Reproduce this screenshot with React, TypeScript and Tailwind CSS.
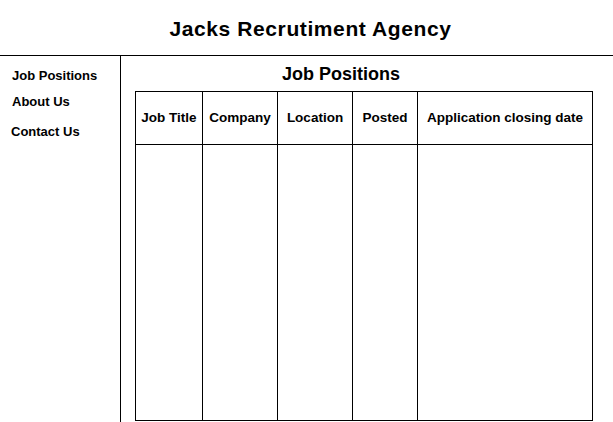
const columns = ['Job Title', 'Company', 'Location', 'Posted', 'Application closing date'];

const navItems = [
  { label: 'Job Positions', className: 'pl-[12px]' },
  { label: 'About Us', className: 'mt-[13px] pl-[12px]' },
  { label: 'Contact Us', className: 'mt-[17px] pl-[11px]' },
];

export default function App() {
  return (
    <div
      className="w-[613px] h-[422px] bg-white text-black font-bold overflow-hidden"
      style={{ fontFamily: '"Liberation Sans", Arial, sans-serif' }}
    >
      {/* Header */}
      <header className="h-[56px] border-b border-black pt-[18px] pl-[8px] text-center">
        <h1 className="text-[21px] leading-none tracking-[0.6px]">Jacks Recrutiment Agency</h1>
      </header>

      <div className="flex h-[366px]">
        {/* Sidebar */}
        <nav className="w-[121px] shrink-0 border-r border-black pt-[13px]">
          {navItems.map((item) => (
            <div key={item.label} className={`text-[13px] leading-none ${item.className}`}>
              {item.label}
            </div>
          ))}
        </nav>

        {/* Main */}
        <main className="flex-1 pl-[14px] pt-[9px]">
          <h2 className="ml-[147px] text-[18px] leading-none">Job Positions</h2>
          <div className="mt-[8px] w-[458px] h-[330px] border border-black grid grid-cols-[67px_75px_75px_65px_174px] grid-rows-[53px_1fr]">
            {columns.map((col, i) => (
              <div
                key={col}
                className={`flex items-center justify-center border-b border-black text-[13.5px] leading-none whitespace-nowrap ${
                  i < columns.length - 1 ? 'border-r' : ''
                }`}
              >
                {col}
              </div>
            ))}
            {columns.map((col, i) => (
              <div key={col + '-body'} className={i < columns.length - 1 ? 'border-r border-black' : ''} />
            ))}
          </div>
        </main>
      </div>
    </div>
  );
}
